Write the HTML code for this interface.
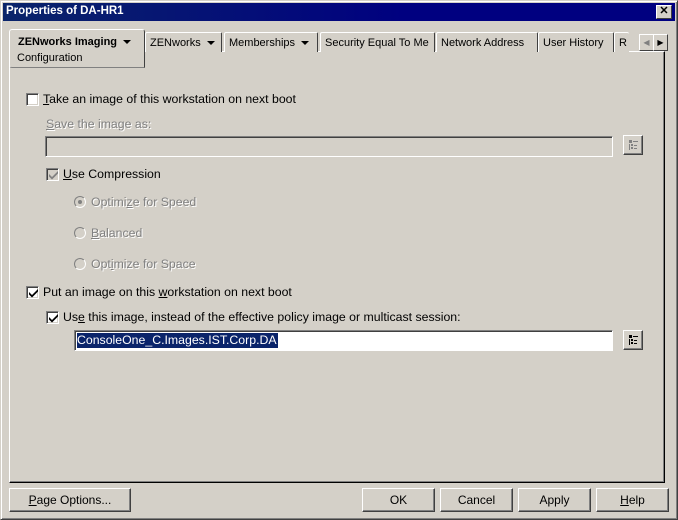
<!DOCTYPE html>
<html><head><style>
*{margin:0;padding:0;box-sizing:border-box}
body{width:678px;height:520px;background:#d4d0c8;font-family:"Liberation Sans",sans-serif;font-size:11px;color:#000;position:relative;overflow:hidden}
.a{position:absolute;white-space:nowrap}
.c{font-size:12.3px}
.win{position:absolute;left:0;top:0;width:678px;height:520px;border:1px solid;border-color:#d4d0c8 #404040 #404040 #d4d0c8;box-shadow:inset 1px 1px #fff,inset -1px -1px #808080}
.title{position:absolute;left:3px;top:3px;width:672px;height:18px;background:linear-gradient(90deg,#0a246a,#000080 60%,#000080);color:#fff;font-weight:bold;font-size:11.5px;padding:2px 3px}
.close{position:absolute;left:656px;top:5px;width:16px;height:14px;background:#d4d0c8;border:1px solid;border-color:#fff #404040 #404040 #fff;font-size:11px;font-weight:bold;text-align:center;line-height:11px;color:#000}
.panel{position:absolute;left:9px;top:51px;width:656px;height:432px;border:1px solid;border-color:#fff #000 #000 #fff;box-shadow:inset -1px -1px #808080}
.tab{position:absolute;top:32px;height:20px;border:1px solid;border-bottom:none;border-color:#fff #404040 #fff #fff;border-radius:2px 2px 0 0;padding:4px 4px;background:#d4d0c8}
.act{top:29px;height:39px;left:9px;width:136px;border:1px solid;border-color:#fff #404040 #808080 #fff;z-index:2;padding:6px 8px;border-radius:3px 3px 0 3px}
.tri{display:inline-block;width:0;height:0;border-left:4px solid transparent;border-right:4px solid transparent;border-top:4px solid #000;margin-left:6px;vertical-align:1px}
.cb{position:absolute;width:13px;height:13px;background:#fff;border:1px solid;border-color:#808080 #fff #fff #808080;box-shadow:inset 1px 1px #404040,inset -1px -1px #d4d0c8}
.cb svg{position:absolute;left:2px;top:2px}
.dis{color:#808080;text-shadow:1px 1px #fff}
.rad{position:absolute;width:12px;height:12px;border-radius:50%;border:1px solid;border-color:#808080 #fff #fff #808080;background:#d4d0c8}
.inp{position:absolute;height:21px;border:1px solid;border-color:#808080 #fff #fff #808080;box-shadow:inset 1px 1px #404040}
.btn{position:absolute;height:24px;border:1px solid;border-color:#fff #404040 #404040 #fff;box-shadow:inset -1px -1px #808080;text-align:center;line-height:22px;font-size:12px}
.br{position:absolute;width:20px;height:20px;border:1px solid;border-color:#fff #404040 #404040 #fff;box-shadow:inset -1px -1px #808080}
u{text-decoration:underline}
</style></head><body>
<div class="win"></div>
<div class="title">Properties of DA-HR1</div>
<div class="close">✕</div>

<div class="panel"></div>
<div class="tab act"><b style="font-size:11px">ZENworks Imaging</b><span class="tri"></span><div style="margin-top:4px;margin-left:-1px">Configuration</div></div>
<div class="tab" style="left:145px;width:77px">ZENworks<span class="tri"></span></div>
<div class="tab" style="left:224px;width:94px">Memberships<span class="tri"></span></div>
<div class="tab" style="left:320px;width:115px">Security Equal To Me</div>
<div class="tab" style="left:436px;width:102px">Network Address</div>
<div class="tab" style="left:538px;width:76px">User History</div>
<div class="tab" style="left:614px;width:15px;border-right:none">R</div>
<div class="a" style="left:639px;top:34px;width:15px;height:17px;border:1px solid;border-color:#fff #404040 #404040 #fff;font-size:8px;color:#808080;text-align:center;line-height:15px">◀</div>
<div class="a" style="left:653px;top:34px;width:15px;height:17px;border:1px solid;border-color:#fff #404040 #404040 #fff;font-size:8px;text-align:center;line-height:15px">▶</div>

<div class="cb" style="left:26px;top:93px"></div>
<div class="a c" style="left:43px;top:92px"><u>T</u>ake an image of this workstation on next boot</div>
<div class="a c dis" style="left:46px;top:117px"><u>S</u>ave the image as:</div>
<div class="inp" style="left:45px;top:136px;width:568px"></div>
<div class="br" style="left:623px;top:135px"><svg width="18" height="18"><g fill="#808080"><rect x="5" y="4" width="3" height="3"/><rect x="9" y="5" width="5" height="1"/><rect x="5" y="8" width="1" height="6"/><rect x="7" y="8" width="2" height="2"/><rect x="7" y="11" width="2" height="2"/><rect x="10" y="9" width="3" height="1"/><rect x="10" y="12" width="3" height="1"/></g></svg></div>

<div class="cb" style="left:46px;top:168px;background:#d4d0c8"><svg width="9" height="9"><path d="M0 3l3 3 6-6v2.5l-6 6-3-3z" fill="#808080"/></svg></div>
<div class="a c" style="left:63px;top:167px"><u>U</u>se Compression</div>
<div class="rad" style="left:74px;top:196px"><div style="position:absolute;left:3px;top:3px;width:4px;height:4px;background:#808080;border-radius:50%"></div></div>
<div class="a c dis" style="left:91px;top:195px">Optimi<u>z</u>e for Speed</div>
<div class="rad" style="left:74px;top:227px"></div>
<div class="a c dis" style="left:91px;top:226px"><u>B</u>alanced</div>
<div class="rad" style="left:74px;top:258px"></div>
<div class="a c dis" style="left:91px;top:257px">Opt<u>i</u>mize for Space</div>

<div class="cb" style="left:26px;top:286px"><svg width="9" height="9"><path d="M0 3l3 3 6-6v2.5l-6 6-3-3z" fill="#000"/></svg></div>
<div class="a c" style="left:43px;top:285px">Put an image on this <u>w</u>orkstation on next boot</div>
<div class="cb" style="left:46px;top:311px"><svg width="9" height="9"><path d="M0 3l3 3 6-6v2.5l-6 6-3-3z" fill="#000"/></svg></div>
<div class="a c" style="left:63px;top:310px">Us<u>e</u> this image, instead of the effective policy image or multicast session:</div>
<div class="inp" style="left:74px;top:330px;width:539px;background:#fff"><span class="a" style="left:2px;top:2px;height:15px;background:#0a246a;color:#fff;padding:0 1px 0 0;font-size:12.3px;line-height:15px">ConsoleOne_C.Images.IST.Corp.DA</span></div>
<div class="br" style="left:623px;top:330px"><svg width="18" height="18"><g fill="#000"><rect x="5" y="4" width="3" height="3"/><rect x="9" y="5" width="5" height="1"/><rect x="5" y="8" width="1" height="6"/><rect x="7" y="8" width="2" height="2"/><rect x="7" y="11" width="2" height="2"/><rect x="10" y="9" width="3" height="1"/><rect x="10" y="12" width="3" height="1"/></g></svg></div>

<div class="btn" style="left:9px;top:488px;width:122px"><u>P</u>age Options...</div>
<div class="btn" style="left:362px;top:488px;width:73px">OK</div>
<div class="btn" style="left:440px;top:488px;width:73px">Cancel</div>
<div class="btn" style="left:518px;top:488px;width:73px">Apply</div>
<div class="btn" style="left:596px;top:488px;width:73px"><u>H</u>elp</div>
</body></html>
